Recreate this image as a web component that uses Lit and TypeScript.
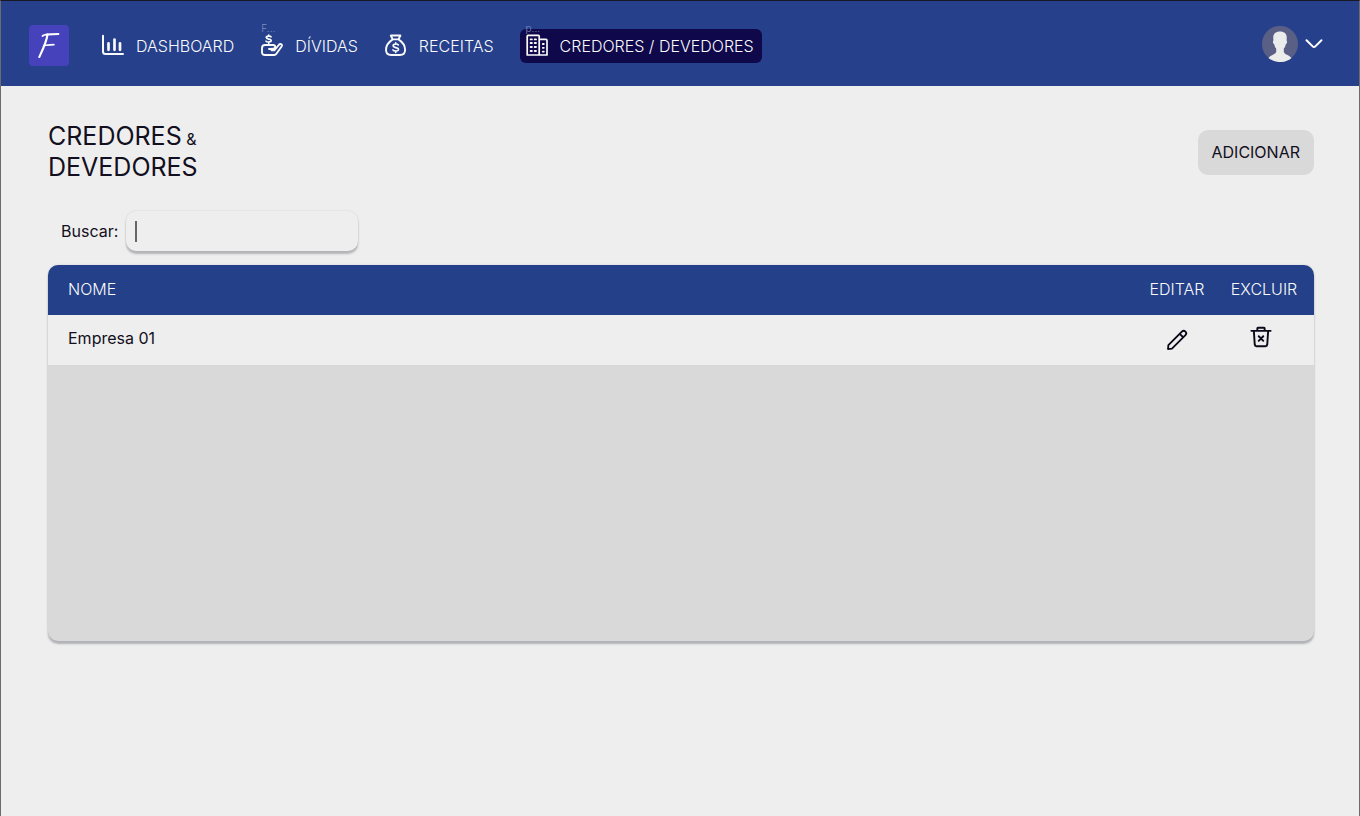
import { LitElement, html, css, svg } from "lit";
import { customElement, state } from "lit/decorators.js";

const icons = {
  chart: svg`<path d="M2 1.800v15.700c0 1.500.9 2.500 2.500 2.500H22" stroke-width="2"/><path d="M7.500 9.300v6.500M13.500 5.500v10.300M19 9.300v6.500" stroke-width="2.700"/>`,
  hand: svg`
    <path d="M11 2.800C10.400 1.900 6.300 1.700 6.300 3.600c0 2 4.900.9 4.900 2.900 0 1.900-4.400 1.800-5.200.6M8.700 1v1M8.700 8.300v1" stroke-width="1.700"/>
    <path d="M11.500 16.200h3l4.700-5.700c1-1.100 3-.3 2.800 1-.1.500-.3.900-.6 1.300l-5 7c-.5.800-1.200 1.200-2.200 1.200H4.800c-1.800 0-2.800-1.200-2.800-2.600v-4.200c0-1.900 1.100-3.200 3-3.200h8.200c2.500 0 2.700 3.400.3 3.600L9 15" stroke-width="1.900"/>`,
  bag: svg`
    <path d="M8.700 5.400 6.800 1.500h9.600l-1.900 3.900zM8.700 5.400C4.800 8 2 11.500 2 15.700c0 3.300 2 5.300 5.200 5.300h8.700c3.200 0 5.200-2 5.200-5.300 0-4.200-2.700-7.700-6.600-10.300" stroke-width="1.900"/>
    <path d="M14.300 11c-.7-1.200-5.200-1.500-5.200.8 0 2.400 5.400 1.200 5.400 3.500s-4.700 2.200-5.600.6M11.700 8.800V10M11.700 17.200v1.200" stroke-width="1.600"/>`,
  building: svg`
    <path d="M2.200 21V2.200c0-.5.400-.8.800-.8h10.400c.5 0 .8.300.8.800V21zM14.200 5.400h6.800c.6 0 1 .4 1 1V21h-7.800" stroke-width="1.700"/>
    <path d="M5.600 5.400h1.300M9.700 5.400h1.300M5.600 9h1.300M9.700 9h1.300M5.600 13h1.300M9.700 13h1.300M5.600 17h1.300M9.700 17h1.300M17.800 10h1M17.800 13.800h1M17.800 17.600h1" stroke-width="1.800"/>`,
  pencil: svg`<path d="m2.200 21.800.4-4.300L17.300 2.800a2.600 2.600 0 0 1 3.900 3.900L6.500 21.400zM15 5.300l3.700 3.700" stroke-width="2"/>`,
  trash: svg`<path d="M1.500 5.300h21M8 5V2.700c0-.4.300-.7.700-.7h6.600c.4 0 .7.300.7.700V5M4.200 5.500l1 14.900c.1 1 .8 1.600 1.800 1.600h10c1 0 1.700-.6 1.800-1.600l1-14.900M9.500 11.200l5 5M14.500 11.200l-5 5" stroke-width="2.100"/>`,
};

type IconName = keyof typeof icons;

@customElement("app-icon")
class AppIcon extends LitElement {
  static properties = { name: { type: String } };
  declare name: IconName;
  static styles = css`
    :host { display: block; flex: none; width: 24px; height: 24px; }
    .glyph {
      display: block; width: 100%; height: 100%; fill: none;
      stroke: currentColor; stroke-linecap: round; stroke-linejoin: round;
    }
  `;
  render() {
    return html`<svg class="glyph" viewBox="0 0 24 24" aria-hidden="true">${icons[this.name]}</svg>`;
  }
}

interface NavItem { label: string; icon: IconName; hint?: string; active?: boolean; }

@customElement("app-root")
class AppRoot extends LitElement {
  @state() private nav: NavItem[] = [
    { label: "DASHBOARD", icon: "chart" },
    { label: "DÍVIDAS", icon: "hand", hint: "F..." },
    { label: "RECEITAS", icon: "bag" },
    { label: "CREDORES / DEVEDORES", icon: "building", hint: "p...", active: true },
  ];
  @state() private companies = ["Empresa 01"];
  @state() private query = "";

  static styles = css`
    :host {
      display: block; box-sizing: border-box; min-height: 100vh;
      background: #eeeeee; color: #120f20;
      border: 1px solid #6b6b6b; border-top-color: #1a1824; border-bottom: 0;
      font-family: Inter, "Liberation Sans", sans-serif; font-size: 16px; line-height: 20px;
    }
    *, *::before, *::after { box-sizing: border-box; }
    button, input { font: inherit; color: inherit; }
    button { border: 0; background: none; padding: 0; cursor: pointer; }

    .topbar {
      display: flex; align-items: center; height: 85px; padding: 4px 36px 0 28px;
      background: #26408b; color: #fafafa;
    }
    .brand { display: block; width: 40px; height: 41px; border-radius: 4px; background: #4542bc; }
    .mark { display: block; width: 40px; height: 41px; fill: none; stroke: #fff; stroke-linecap: round; }
    .nav { display: flex; align-items: center; gap: 26px; margin-left: 32px; }
    .link {
      position: relative; display: flex; align-items: center; gap: 11px; height: 34px;
      color: inherit; text-decoration: none; white-space: nowrap; font-weight: 300;
    }
    .link.active { padding: 0 8px 0 5px; border-radius: 6px; background: #0f084b; }
    .hint {
      position: absolute; left: 1px; top: -7px; font-size: 10px; line-height: 12px;
      color: #7e8dbe;
    }
    .active .hint { left: 6px; }
    .account { display: flex; align-items: center; gap: 7px; margin: 0 0 4px auto; }
    .avatar { display: block; width: 36px; height: 36px; }
    .chevron { display: block; width: 18px; height: 12px; fill: none; stroke: #fff; stroke-width: 2; stroke-linecap: round; stroke-linejoin: round; }

    .page { padding: 35px 45px 40px 47px; }
    .heading { display: flex; justify-content: space-between; align-items: center; }
    .title { margin: 0; font-size: 25px; line-height: 31px; font-weight: 400; }
    .amp { font-size: 16px; line-height: 16px; }
    .add { height: 45px; padding: 0 14px; border-radius: 10px; background: #d9d9d9; }
    .search { display: flex; align-items: center; gap: 8px; margin: 28px 0 14px; padding-left: 13px; }
    .field {
      width: 232px; height: 40px; padding: 0 9px; border: 0; border-radius: 10px; outline: none;
      background: linear-gradient(#666, #666) 9px 10px / 2px 21px no-repeat #eeeeee;
      box-shadow: 0 3px 2px #b5b5b8, 0 0 2px #cfcfd4;
    }
    .panel {
      min-height: 376px; border-radius: 10px; background: #d9d9d9; overflow: hidden;
      box-shadow: 0 3px 2px #b2b3b8, 0 0 2px #cfcfd4;
    }
    .grid { width: 100%; border-collapse: collapse; table-layout: fixed; }
    .grid th {
      height: 50px; padding: 0 0 2px; font-weight: 300; background: #234089; color: #fafafa;
    }
    .grid td { height: 50px; padding: 0 0 4px; background: #eeeeee; }
    .grid .name { text-align: left; padding-left: 20px; }
    .grid .edit { width: 82px; text-align: center; }
    .grid .remove { width: 96px; text-align: center; padding-right: 4px; }
    .grid td.remove { padding-right: 10px; padding-bottom: 6px; }
    .grid td.edit { padding-bottom: 0; }
    .action { display: inline-block; vertical-align: middle; color: #0c0a18; }
    .action app-icon { width: 22px; height: 22px; }
  `;

  render() {
    const rows = this.companies.filter((c) => c.toLowerCase().includes(this.query.toLowerCase()));
    return html`
      <header class="topbar">
        <a class="brand" href="#" aria-label="Início">
          <svg class="mark" viewBox="0 0 40 41" aria-hidden="true">
            <path d="M18.500 9.500C17.500 17 14 24 10.300 32" stroke-width="2.100"/>
            <path d="M13.500 11c.8-1.600 6-2 16-2" stroke-width="1.800"/>
            <path d="M15 20.700c3-.8 6-.9 9.800-1" stroke-width="1.800"/>
          </svg>
        </a>
        <nav class="nav">
          ${this.nav.map((n) => html`
            <a class="link ${n.active ? "active" : ""}" href="#">
              ${n.hint ? html`<span class="hint">${n.hint}</span>` : ""}
              <app-icon name=${n.icon}></app-icon><span>${n.label}</span>
            </a>`)}
        </nav>
        <button class="account" aria-label="Conta">
          <svg class="avatar" viewBox="0 0 36 36" aria-hidden="true">
            <circle cx="18" cy="18" r="18" fill="#5a5f86"/>
            <path fill="#ececec" d="M18 5.500c-4.600 0-7 2.500-6.700 6.500l.1 2.500c-.8.300-.6 3 .8 3.700.4 2 1 3.200 2 4.300v3.500c-.7 2.500-5 2.900-7.700 5.900A18 18 0 0 0 29.500 31.900c-2.700-3-7-3.400-7.700-5.900v-3.500c1-1.100 1.600-2.300 2-4.300 1.400-.7 1.600-3.400.8-3.700l.1-2.500c.3-4-2.100-6.500-6.700-6.500z"/>
          </svg>
          <svg class="chevron" viewBox="0 0 18 12" aria-hidden="true"><path d="M1.500 2.300 7.700 8.400c.8.800 1.800.8 2.600 0l6.200-6.100"/></svg>
        </button>
      </header>
      <main class="page">
        <div class="heading">
          <h1 class="title">CREDORES<span class="amp"> &amp;</span><br />DEVEDORES</h1>
          <button class="add">ADICIONAR</button>
        </div>
        <div class="search">
          <label for="search">Buscar:</label>
          <input class="field" id="search" type="text" autocomplete="off" .value=${this.query}
            @input=${(e: Event) => (this.query = (e.target as HTMLInputElement).value)} />
        </div>
        <div class="panel">
          <table class="grid">
            <thead>
              <tr><th class="name">NOME</th><th class="edit">EDITAR</th><th class="remove">EXCLUIR</th></tr>
            </thead>
            <tbody>
              ${rows.map((c) => html`
                <tr>
                  <td class="name">${c}</td>
                  <td class="edit"><button class="action" aria-label="Editar ${c}"><app-icon name="pencil"></app-icon></button></td>
                  <td class="remove"><button class="action" aria-label="Excluir ${c}"><app-icon name="trash"></app-icon></button></td>
                </tr>`)}
            </tbody>
          </table>
        </div>
      </main>
    `;
  }
}
